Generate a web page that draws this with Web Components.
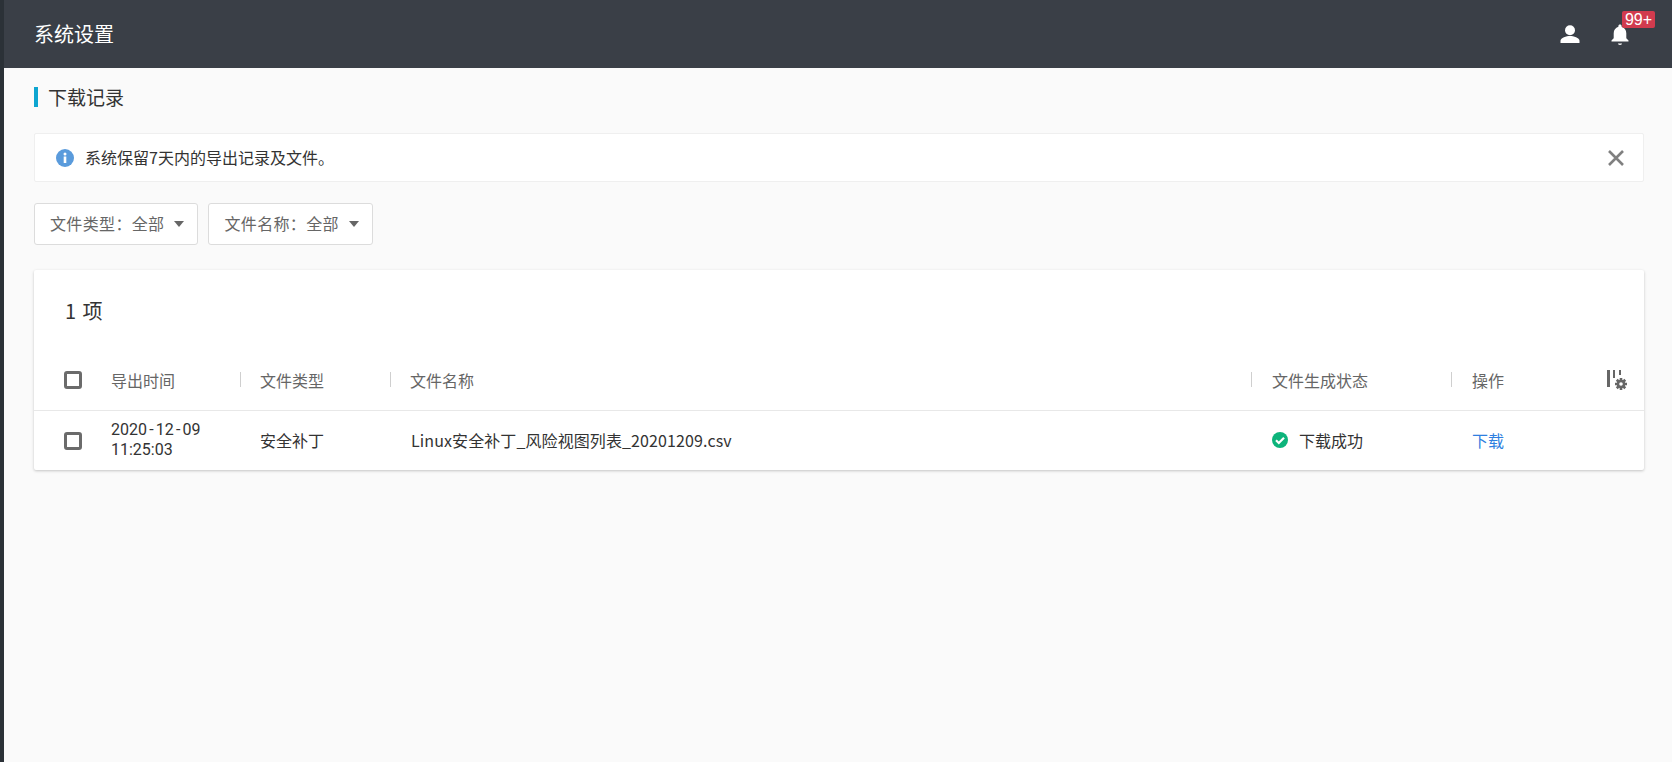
<!DOCTYPE html>
<html lang="zh-CN">
<head>
<meta charset="utf-8">
<title>下载记录</title>
<style>
    html, body { margin: 0; height: 100%; }
    body {
        background: #fafafa;
        font-family: "Noto Sans CJK SC", "Noto Sans", sans-serif;
        font-size: 16px;
    }
</style>
</head>
<body>
<settings-page>
    <app-header slot="header" title-text="系统设置" badge="99+"></app-header>
    <section-title>下载记录</section-title>
    <info-alert>系统保留7天内的导出记录及文件。</info-alert>
    <filter-bar>
        <filter-select>文件类型&#xFF1A;全部</filter-select>
        <filter-select>文件名称&#xFF1A;全部</filter-select>
    </filter-bar>
    <download-table></download-table>
</settings-page>

<script>
    class SettingsPage extends HTMLElement {
        constructor() {
            super();
            this.attachShadow({ mode: 'open' });
            this.shadowRoot.innerHTML = `
                <style>
                    :host { display: block; min-height: 762px; border-left: 4px solid #2b3137; box-sizing: border-box; }
                    main { padding: 19px 28px 0 30px; }
                </style>
                <slot name="header"></slot>
                <main><slot></slot></main>`;
        }
    }

    class AppHeader extends HTMLElement {
        constructor() {
            super();
            this.attachShadow({ mode: 'open' });
            this.shadowRoot.innerHTML = `
                <style>
                    :host { display: flex; align-items: center; height: 68px; padding: 0 0 0 30px; background: #3a3f47; color: #fff; }
                    .title { font-size: 20px; flex: 1; padding-bottom: 2px; }
                    .icons { display: flex; align-items: center; gap: 18px; margin-right: 36px; }
                    .icon { position: relative; width: 32px; height: 32px; display: flex; align-items: center; justify-content: center; }
                    svg { display: block; fill: #fff; }
                    .badge {
                        position: absolute; left: 18px; top: -7px; box-sizing: border-box; height: 17px; width: 33px;
                        background: #d13b4e; border-radius: 2px;
                        font: 16px/17px "Liberation Sans", sans-serif; text-align: center; white-space: nowrap;
                    }
                </style>
                <div class="title"></div>
                <div class="icons">
                    <div class="icon">
                        <svg width="24" height="24" viewBox="0 0 24 24"><circle cx="12" cy="8.200" r="5"/><path d="M2.500 21v-2.200c0-3 6-4.800 9.500-4.800s9.500 1.800 9.500 4.800V21z"/></svg>
                    </div>
                    <div class="icon">
                        <svg width="24" height="24" viewBox="0 0 24 24"><path d="M12 2.500c1 0 1.600.7 1.600 1.600v.6c3 .8 4.700 3.400 4.700 6.500v5l2.200 2.400v1H3.500v-1l2.200-2.400v-5c0-3.100 1.700-5.700 4.700-6.500v-.6c0-.9.600-1.600 1.600-1.600zM10 21.600h4c0 1-.9 1.400-2 1.400s-2-.4-2-1.400z"/></svg>
                        <span class="badge"></span>
                    </div>
                </div>`;
        }
        connectedCallback() {
            this.shadowRoot.querySelector('.title').textContent = this.getAttribute('title-text');
            this.shadowRoot.querySelector('.badge').textContent = this.getAttribute('badge');
        }
    }

    class SectionTitle extends HTMLElement {
        constructor() {
            super();
            this.attachShadow({ mode: 'open' });
            this.shadowRoot.innerHTML = `
                <style>
                    :host { display: block; height: 20px; line-height: 20px; padding-left: 10px; border-left: 4px solid #0ea5d0; font-size: 19px; color: #333; }
                </style>
                <slot></slot>`;
        }
    }

    class InfoAlert extends HTMLElement {
        constructor() {
            super();
            this.attachShadow({ mode: 'open' });
            this.shadowRoot.innerHTML = `
                <style>
                    :host {
                        display: flex; align-items: center; box-sizing: border-box; height: 49px; margin-top: 26px;
                        padding: 0 19px 0 21px; background: #fff; border: 1px solid #efefef; border-radius: 2px; color: #333;
                    }
                    .info { margin-right: 11px; flex: none; }
                    .text { flex: 1; padding-bottom: 2px; }
                    .close { flex: none; display: block; }
                </style>
                <svg class="info" width="18" height="18" viewBox="0 0 18 18">
                    <circle cx="9" cy="9" r="9" fill="#5a9bdc"/>
                    <rect x="7.700" y="7.500" width="2.600" height="6.500" fill="#fff"/>
                    <circle cx="9" cy="5" r="1.500" fill="#fff"/>
                </svg>
                <div class="text"><slot></slot></div>
                <svg class="close" width="16" height="16" viewBox="0 0 16 16">
                    <path d="M1 1l14 14M15 1L1 15" stroke="#808080" stroke-width="2.600" fill="none"/>
                </svg>`;
        }
    }

    class FilterBar extends HTMLElement {
        constructor() {
            super();
            this.attachShadow({ mode: 'open' });
            this.shadowRoot.innerHTML = `
                <style>
                    :host { display: flex; gap: 10px; margin: 21px 0 25px; }
                </style>
                <slot></slot>`;
        }
    }

    class FilterSelect extends HTMLElement {
        constructor() {
            super();
            this.attachShadow({ mode: 'open' });
            this.shadowRoot.innerHTML = `
                <style>
                    :host {
                        display: inline-flex; align-items: center; box-sizing: border-box; height: 42px; padding: 0 13px 2px 15px;
                        background: #fff; border: 1px solid #dcdcdc; border-radius: 3px; color: #666; letter-spacing: .35px;
                    }
                    .arrow { margin: 2px 0 0 10px; width: 0; height: 0; border: 5.500px solid transparent; border-top: 6px solid #666; border-bottom: 0; }
                </style>
                <slot></slot><span class="arrow"></span>`;
        }
    }

    const COLS = '77px 129px 150px 1fr 200px 193px';

    class TableCell extends HTMLElement {
        constructor() {
            super();
            this.attachShadow({ mode: 'open' });
            this.shadowRoot.innerHTML = `
                <style>
                    :host { display: flex; align-items: center; position: relative; min-width: 0; }
                    :host([divider])::before {
                        content: ""; position: absolute; left: 0; top: 50%; margin-top: -8px; width: 1px; height: 15px; background: #cfcfcf;
                    }
                    :host([pad]) { padding-left: 21px; }
                    :host([pad="tight"]) { padding-left: 20px; }
                    :host([check]) { padding-left: 30px; }
                    :host([lift]) { padding-bottom: 2px; }
                </style>
                <slot></slot>`;
        }
    }

    class CheckBox extends HTMLElement {
        constructor() {
            super();
            this.attachShadow({ mode: 'open' });
            this.shadowRoot.innerHTML = `
                <style>
                    :host { display: block; box-sizing: border-box; width: 18px; height: 18px; border: 3px solid #6b6b6b; border-radius: 3px; background: #fff; }
                </style>`;
        }
    }

    class DownloadTable extends HTMLElement {
        constructor() {
            super();
            this.attachShadow({ mode: 'open' });
            this.shadowRoot.innerHTML = `
                <style>
                    :host {
                        display: block; background: #fff; border-radius: 2px; height: 200px;
                        box-shadow: 0 1px 3px rgba(0,0,0,.22);
                    }
                    .count { height: 80px; box-sizing: border-box; padding: 26px 0 0 31px; font-size: 20px; line-height: 30px; color: #333; word-spacing: 2px; }
                    .row { display: grid; grid-template-columns: ${COLS}; }
                    .head { color: #666; border-bottom: 1px solid #e8e8e8; position: relative; box-sizing: border-box; height: 61px; }
                    .body { height: 59px; color: #333; }
                    .time { font-family: Roboto, sans-serif; line-height: 20px; margin-top: 1px; }
                    .dash { margin: 0 2.200px; }
                    .name { letter-spacing: .1px; white-space: nowrap; }
                    .ok { display: block; margin-right: 11px; }
                    a { color: #2f7fe0; text-decoration: none; }
                    .cols { position: absolute; right: 16px; top: 20px; display: block; }
                </style>
                <div class="count">1 项</div>
                <div class="row head">
                    <table-cell check><check-box></check-box></table-cell>
                    <table-cell>导出时间</table-cell>
                    <table-cell divider pad="tight">文件类型</table-cell>
                    <table-cell divider pad="tight">文件名称</table-cell>
                    <table-cell divider pad>文件生成状态</table-cell>
                    <table-cell divider pad>操作</table-cell>
                    <svg class="cols" width="22" height="21" viewBox="0 0 22 21">
                        <rect x="1" y="0" width="3" height="17" fill="#666"/>
                        <rect x="7" y="0" width="2" height="8" fill="#666"/>
                        <rect x="13" y="0" width="2" height="5" fill="#666"/>
                        <g transform="translate(15 14)" fill="#666">
                            <circle r="4.300"/>
                            <path d="M-1.300-6h2.600v12h-2.600zM-6-1.300h12v2.600h-12z"/>
                            <path d="M-1.300-6h2.600v12h-2.600zM-6-1.300h12v2.600h-12z" transform="rotate(45)"/>
                        </g>
                        <circle cx="15" cy="14" r="1.800" fill="#fff"/>
                    </svg>
                </div>
                <div class="row body">
                    <table-cell check><check-box></check-box></table-cell>
                    <table-cell lift><div class="time">2020<span class="dash">-</span>12<span class="dash">-</span>09<br>11:25:03</div></table-cell>
                    <table-cell lift pad="tight">安全补丁</table-cell>
                    <table-cell lift pad><span class="name">Linux安全补丁_风险视图列表_20201209.csv</span></table-cell>
                    <table-cell lift pad>
                        <svg class="ok" width="16" height="16" viewBox="0 0 16 16">
                            <circle cx="8" cy="8" r="8" fill="#0db47b"/>
                            <path d="M4 8.300l2.800 2.700L12 5.700" stroke="#fff" stroke-width="2.200" fill="none"/>
                        </svg>
                        下载成功
                    </table-cell>
                    <table-cell lift pad><a href="#">下载</a></table-cell>
                </div>`;
        }
    }

    customElements.define('settings-page', SettingsPage);
    customElements.define('app-header', AppHeader);
    customElements.define('section-title', SectionTitle);
    customElements.define('info-alert', InfoAlert);
    customElements.define('filter-bar', FilterBar);
    customElements.define('filter-select', FilterSelect);
    customElements.define('table-cell', TableCell);
    customElements.define('check-box', CheckBox);
    customElements.define('download-table', DownloadTable);
</script>
</body>
</html>
